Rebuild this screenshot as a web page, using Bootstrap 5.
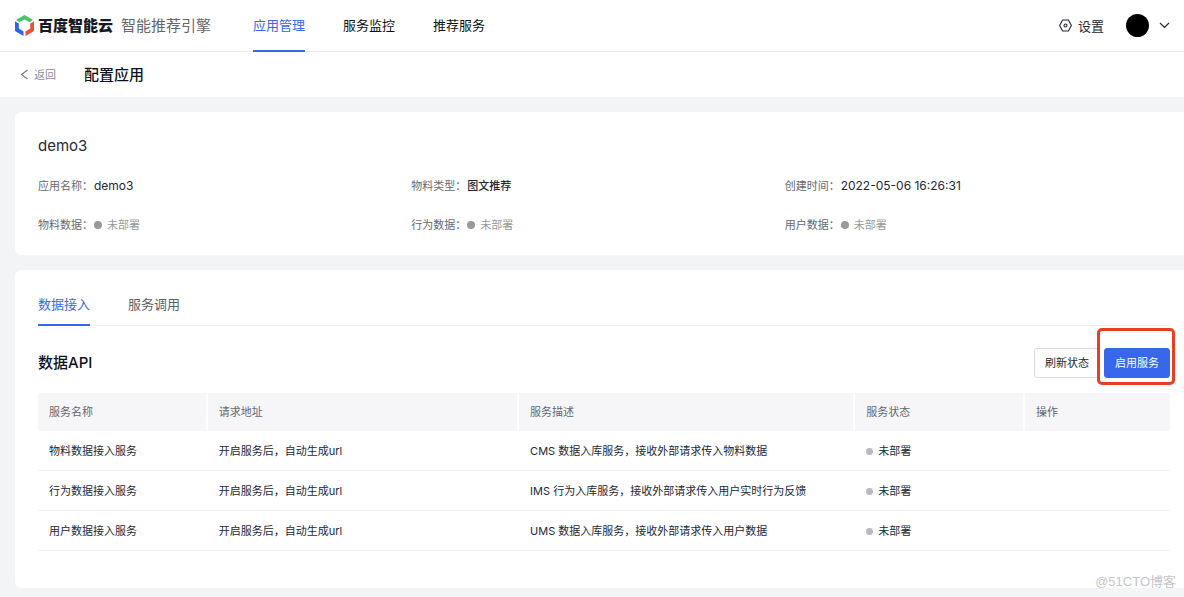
<!DOCTYPE html>
<html lang="zh-CN">
<head>
<meta charset="utf-8">
<meta name="viewport" content="width=device-width, initial-scale=1">
<title>智能推荐引擎 - 配置应用</title>
<link href="https://cdn.jsdelivr.net/npm/bootstrap@5.3.0/dist/css/bootstrap.min.css" rel="stylesheet">
<style>
body{font-family:Inter,"Noto Sans CJK SC",sans-serif;font-size:11px;line-height:20px;color:#242833;background:#f3f4f6}
a{text-decoration:none}
.topbar{height:52px;border-bottom:1px solid #e9e9eb;padding-left:15px;padding-right:14px}
.brand-name{font-size:15px;font-weight:900;color:#161a26;margin-left:4px}
.brand-sub{font-size:15px;color:#666;margin-left:8px}
.main-tabs{gap:38px;margin-left:42px;font-size:13px}
.main-tabs a,.sub-tabs a{color:#111;border-bottom:2px solid transparent}
.main-tabs a{height:52px;line-height:50px}
.main-tabs a.active,.sub-tabs a.active{color:#3768ec;border-color:#3768ec}
.top-link{font-size:13px;color:#242833;gap:6px}
.avatar{width:23px;height:23px;background:#000;margin-left:22px;margin-right:10px}
.pagebar{height:45px;padding-left:20px}
.back-link{color:#8a8d94;gap:5px}
.page-title,.section-title{font-size:15px;line-height:22px;font-weight:500;color:#0e1220}
.panel{border-radius:6px 0 0 6px;margin-left:15px;margin-top:15px;padding-left:23px}
.info-panel{padding-top:23px;padding-bottom:20px;padding-right:26px}
.app-name{font-size:15px;line-height:22px;margin-bottom:19px}
.info-row{row-gap:19px}
.info-row dt{font-weight:400;color:#666970;min-width:56px}
.info-row dd{font-weight:500}
.info-row dd.latin{font-size:12px;font-weight:400}
.info-row dd.muted{color:#999;font-weight:400}
.dot{display:inline-block;width:8px;height:8px;border-radius:50%;background:#999;margin-right:5px}
.data-panel{padding-top:15px;padding-right:14px;padding-bottom:37px}
.sub-tabs{font-size:13px;gap:38px;border-bottom:1px solid #efeff2}
.sub-tabs a{height:41px;line-height:38px;margin-bottom:-1px}
.sub-tabs a:not(.active){color:#5c5f66}
.tool-row{padding-top:22px;padding-bottom:15px}
.tool-row .btn{font-size:11px;line-height:20px;padding:4px 10px;border-radius:3px}
.btn-plain{border-color:#d9dadd;color:#242833;background:#fff}
.btn-blue,.btn-blue:hover{background:#3768ec;border-color:#3768ec;color:#fff}
.marked{margin-left:4px}
.marked::after{content:"";position:absolute;inset:-20px -5px -7px -7px;border:3px solid #ea3d23;border-radius:5px;pointer-events:none}
.svc-table{table-layout:fixed;border-collapse:separate;border-spacing:0;font-size:11px;line-height:20px;margin:0}
.svc-table th{background:#f6f6f8;color:#64676e;font-weight:400;padding:9px 11px;border:0;border-right:2px solid #fff}
.svc-table th:last-child{border-right:0}
.svc-table td{padding:10px 11px 9px;border-bottom:1px solid #f0f0f2;color:#242833}
.svc-table .dot{width:7px;height:7px;background:#b8bac1}
.c-name,.c-state{width:15%}.c-url{width:27.5%}.c-desc{width:29.7%}
.watermark{right:8px;bottom:-4px;font:13px/20px "Liberation Sans","Noto Sans CJK SC",sans-serif;color:#c6c6c8}
</style>
</head>
<body>
<header class="topbar bg-white d-flex align-items-center">
  <a href="#" class="d-flex align-items-center text-nowrap">
    <svg width="19" height="21" viewBox="0 0 19 21" aria-hidden="true">
      <path fill="#4bc26b" d="M9.500 0 18 5 14.500 7.300 9.500 4.600 4.500 7.300 1 5z"/>
      <path fill="#2f62ee" d="M0 6.200 3.800 8.500V13.600L8.500 16.400V21L0 16z"/>
      <path fill="#ee5035" d="M19 6.200 15.200 8.500V13.600L10.500 16.400V21L19 16z"/>
    </svg>
    <span class="brand-name">百度智能云</span><span class="brand-sub">智能推荐引擎</span>
  </a>
  <nav class="main-tabs d-flex align-self-start text-nowrap">
    <a href="#" class="active" aria-current="page">应用管理</a>
    <a href="#">服务监控</a>
    <a href="#">推荐服务</a>
  </nav>
  <div class="ms-auto d-flex align-items-center text-nowrap">
    <a href="#" class="top-link d-flex align-items-center">
      <svg width="13" height="13" viewBox="0 0 13 13" fill="none" stroke="#242833" stroke-width="1.100" aria-hidden="true"><path d="M3.600 1H9.400L12.400 6.500 9.400 12H3.600L.6 6.500z" stroke-linejoin="round"/><circle cx="6.500" cy="6.500" r="1.500"/></svg>设置
    </a>
    <span class="avatar rounded-circle"></span>
    <svg width="11" height="7" viewBox="0 0 11 7" fill="none" stroke="#242833" stroke-width="1.200" aria-hidden="true"><path d="M1 1 5.500 5.500 10 1"/></svg>
  </div>
</header>
<div class="pagebar bg-white d-flex align-items-center">
  <a href="#" class="back-link d-flex align-items-center"><svg width="9" height="11" viewBox="0 0 9 11" fill="none" stroke="#777a80" stroke-width="1.100" aria-hidden="true"><path d="M7.500 1 1.500 5.500 7.500 10"/></svg>返回</a>
  <h1 class="page-title mb-0 ms-4 ps-1">配置应用</h1>
</div>
<main>
  <section class="panel info-panel bg-white">
    <h2 class="app-name fw-normal">demo3</h2>
    <dl class="info-row row g-0 mb-0">
      <div class="col-4 d-flex"><dt>应用名称：</dt><dd class="mb-0 latin">demo3</dd></div>
      <div class="col-4 d-flex"><dt>物料类型：</dt><dd class="mb-0">图文推荐</dd></div>
      <div class="col-4 d-flex"><dt>创建时间：</dt><dd class="mb-0 latin">2022-05-06 16:26:31</dd></div>
      <div class="col-4 d-flex"><dt>物料数据：</dt><dd class="mb-0 muted"><span class="dot"></span>未部署</dd></div>
      <div class="col-4 d-flex"><dt>行为数据：</dt><dd class="mb-0 muted"><span class="dot"></span>未部署</dd></div>
      <div class="col-4 d-flex"><dt>用户数据：</dt><dd class="mb-0 muted"><span class="dot"></span>未部署</dd></div>
    </dl>
  </section>
  <section class="panel data-panel bg-white position-relative">
    <nav class="sub-tabs d-flex">
      <a href="#" class="active" aria-current="true">数据接入</a>
      <a href="#">服务调用</a>
    </nav>
    <div class="tool-row d-flex align-items-center">
      <h2 class="section-title mb-0 me-auto">数据API</h2>
      <button type="button" class="btn btn-plain">刷新状态</button>
      <div class="marked position-relative"><button type="button" class="btn btn-blue">启用服务</button></div>
    </div>
    <table class="svc-table table">
      <thead><tr><th scope="col" class="c-name">服务名称</th><th scope="col" class="c-url">请求地址</th><th scope="col" class="c-desc">服务描述</th><th scope="col" class="c-state">服务状态</th><th scope="col">操作</th></tr></thead>
      <tbody>
        <tr><td>物料数据接入服务</td><td>开启服务后，自动生成url</td><td>CMS 数据入库服务，接收外部请求传入物料数据</td><td><span class="dot"></span>未部署</td><td></td></tr>
        <tr><td>行为数据接入服务</td><td>开启服务后，自动生成url</td><td>IMS 行为入库服务，接收外部请求传入用户实时行为反馈</td><td><span class="dot"></span>未部署</td><td></td></tr>
        <tr><td>用户数据接入服务</td><td>开启服务后，自动生成url</td><td>UMS 数据入库服务，接收外部请求传入用户数据</td><td><span class="dot"></span>未部署</td><td></td></tr>
      </tbody>
    </table>
    <div class="watermark position-absolute">@51CTO博客</div>
  </section>
</main>
<script src="https://cdn.jsdelivr.net/npm/bootstrap@5.3.0/dist/js/bootstrap.bundle.min.js"></script>
</body>
</html>
